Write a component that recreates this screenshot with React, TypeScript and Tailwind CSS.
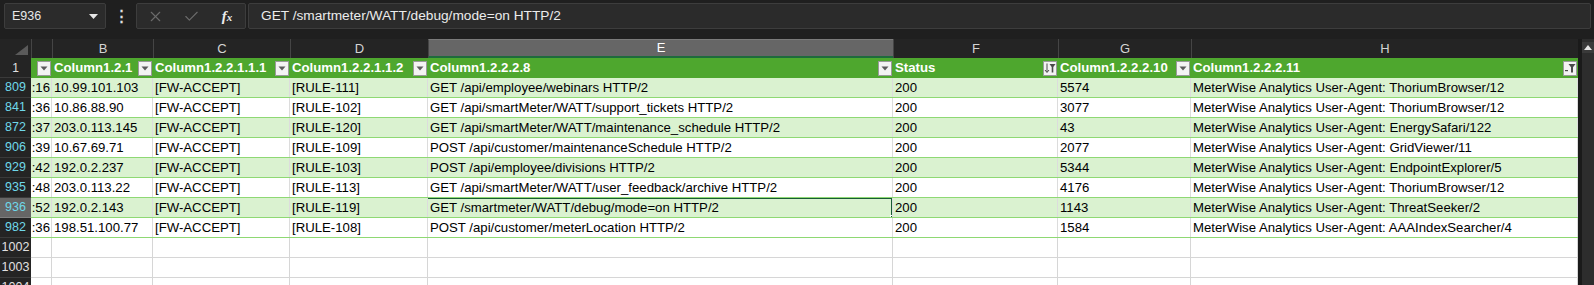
import { X, Check } from "lucide-react";

type Row = {
  n: number;
  a: string;
  b: string;
  d: string;
  e: string;
  g: string;
  ua: string;
};

const rows: Row[] = [
  { n: 809, a: ":16", b: "10.99.101.103", d: "[RULE-111]", e: "GET /api/employee/webinars HTTP/2", g: "5574", ua: "ThoriumBrowser/12" },
  { n: 841, a: ":36", b: "10.86.88.90", d: "[RULE-102]", e: "GET /api/smartMeter/WATT/support_tickets HTTP/2", g: "3077", ua: "ThoriumBrowser/12" },
  { n: 872, a: ":37", b: "203.0.113.145", d: "[RULE-120]", e: "GET /api/smartMeter/WATT/maintenance_schedule HTTP/2", g: "43", ua: "EnergySafari/122" },
  { n: 906, a: ":39", b: "10.67.69.71", d: "[RULE-109]", e: "POST /api/customer/maintenanceSchedule HTTP/2", g: "2077", ua: "GridViewer/11" },
  { n: 929, a: ":42", b: "192.0.2.237", d: "[RULE-103]", e: "POST /api/employee/divisions HTTP/2", g: "5344", ua: "EndpointExplorer/5" },
  { n: 935, a: ":48", b: "203.0.113.22", d: "[RULE-113]", e: "GET /api/smartMeter/WATT/user_feedback/archive HTTP/2", g: "4176", ua: "ThoriumBrowser/12" },
  { n: 936, a: ":52", b: "192.0.2.143", d: "[RULE-119]", e: "GET /smartmeter/WATT/debug/mode=on HTTP/2", g: "1143", ua: "ThreatSeeker/2" },
  { n: 982, a: ":36", b: "198.51.100.77", d: "[RULE-108]", e: "POST /api/customer/meterLocation HTTP/2", g: "1584", ua: "AAAIndexSearcher/4" },
];

// column widths A..H (A is scrolled, only its tail shows)
const widths = ["w-[21px]", "w-[101px]", "w-[137px]", "w-[138px]", "w-[465px]", "w-[165px]", "w-[133px]", "w-[387px]"];
const letters = ["", "B", "C", "D", "E", "F", "G", "H"];
const headers = ["", "Column1.2.1", "Column1.2.2.1.1.1", "Column1.2.2.1.1.2", "Column1.2.2.2.8", "Status", "Column1.2.2.2.10", "Column1.2.2.2.11"];

const FilterButton = ({ kind = "plain" }: { kind?: "plain" | "sort" | "filter" }) => (
  <div className="w-[14px] h-[15px] shrink-0 bg-[#f3f3f3] border border-[#9a9a9a] flex items-center justify-center">
    <svg width="12" height="12" viewBox="0 0 12 12">
      {kind === "plain" && <polygon points="2.5,4.5 9.5,4.5 6,8.5" fill="#5b5b5b" />}
      {kind === "sort" && (
        <g fill="#4a4a4a" stroke="#4a4a4a">
          <line x1="3" y1="1.5" x2="3" y2="10" strokeWidth="1" />
          <polyline points="1,8 3,10.5 5,8" fill="none" strokeWidth="1" />
          <polygon points="5.5,2 11.5,2 9.3,5 9.3,10.5 7.7,10.5 7.7,5" stroke="none" />
        </g>
      )}
      {kind === "filter" && (
        <g fill="#4a4a4a">
          <rect x="1" y="8" width="3" height="1.2" />
          <polygon points="4.5,2 11.5,2 9,5.2 9,10.5 7,10.5 7,5.2" />
        </g>
      )}
    </svg>
  </div>
);

const sheetFont = "font-['Liberation_Sans',Arial,sans-serif]";

export default function App() {
  return (
    <div className={`w-[1594px] h-[285px] overflow-hidden bg-[#1f1f1f] ${sheetFont}`}>
      {/* formula bar */}
      <div className="h-[39px] flex items-start pt-[3px]">
        <div className="ml-[4px] w-[102px] h-[26px] bg-[#2b2b2b] border border-[#3d3d3d] rounded-[2px] flex items-center justify-between pl-[7px] pr-[7px]">
          <span className="text-[12.5px] text-[#e8e8e8]">E936</span>
          <svg width="9" height="5" viewBox="0 0 9 5">
            <polygon points="0,0 9,0 4.5,5" fill="#e6e6e6" />
          </svg>
        </div>
        <div className="w-[30px] h-[26px] flex items-center justify-center text-[#e0e0e0] text-[15px] font-bold">⋮</div>
        <div className="w-[110px] h-[26px] bg-[#2b2b2b] border border-[#3d3d3d] rounded-[2px] flex items-center">
          <div className="w-[36px] flex justify-center text-[#6b6b6b]">
            <X size={17} strokeWidth={1.6} />
          </div>
          <div className="w-[36px] flex justify-center text-[#6b6b6b]">
            <Check size={17} strokeWidth={1.6} />
          </div>
          <div className="w-[36px] flex justify-center items-baseline text-[#ececec] font-['Liberation_Serif',serif] italic">
            <span className="text-[15px] font-bold">f</span>
            <span className="text-[11px] font-bold">x</span>
          </div>
        </div>
        <div className="ml-[2px] mr-[3px] flex-1 h-[26px] bg-[#2b2b2b] border border-[#3d3d3d] rounded-[2px] flex items-center pl-[12px]">
          <span className="text-[13.7px] text-[#ececec] whitespace-nowrap">GET /smartmeter/WATT/debug/mode=on HTTP/2</span>
        </div>
      </div>

      <div className="flex">
        <div className="w-[1578px]">
          {/* column letters */}
          <div className="flex h-[19px] bg-[#242424]">
            <div className="w-[31px] h-full flex items-end justify-end pr-[3px] pb-[3px]">
              <svg width="13" height="10" viewBox="0 0 13 10">
                <polygon points="13,0 13,10 0,10" fill="#5a5a5a" />
              </svg>
            </div>
            {letters.map((l, i) => (
              <div
                key={i}
                className={`${widths[i]} h-full flex items-center justify-center text-[13px] border-l border-[#454545] ${
                  l === "E" ? "bg-[#666666] text-white border-b-2 border-b-[#1e6b3c] border-t border-t-[#7a7a7a]" : "text-[#d4d4d4]"
                }`}
              >
                {l}
              </div>
            ))}
          </div>

          {/* table header row */}
          <div className="flex h-[20px]">
            <div className="w-[31px] h-full flex items-center justify-center text-[12px] text-[#e0e0e0] bg-[#242424] border-b border-[#3a3a3a]">1</div>
            {headers.map((h, i) => (
              <div key={i} className={`${widths[i]} h-full bg-[#4ea72e] flex items-center justify-between pl-[2px] pr-[1px] overflow-hidden`}>
                <span className="text-[13.2px] font-bold text-white whitespace-nowrap">{h}</span>
                <FilterButton kind={i === 5 ? "sort" : i === 7 ? "filter" : "plain"} />
              </div>
            ))}
          </div>

          {/* data rows */}
          {rows.map((r, idx) => {
            const cells = [r.a, r.b, "[FW-ACCEPT]", r.d, r.e, "200", r.g, `MeterWise Analytics User-Agent: ${r.ua}`];
            const active = r.n === 936;
            return (
              <div key={r.n} className="flex h-[20px]">
                <div
                  className={`w-[31px] h-full flex items-center justify-center text-[12.5px] text-[#6fd8ea] border-b ${
                    active ? "bg-[#666666] border-[#808080]" : "bg-[#242424] border-[#3a3a3a]"
                  }`}
                >
                  {r.n}
                </div>
                <div className={`flex border-b border-[#8ed973] ${idx % 2 === 0 ? "bg-[#daf2d0]" : "bg-white"}`}>
                  {cells.map((c, i) => (
                    <div
                      key={i}
                      className={`${widths[i]} h-[19px] border-r border-[#dcdcdc] flex items-center overflow-hidden whitespace-nowrap text-[13.2px] text-black ${
                        i === 0 ? "justify-end pr-[1px]" : "pl-[2px]"
                      } ${active && i === 4 ? "relative" : ""}`}
                    >
                      {c}
                      {active && i === 4 && (
                        <>
                          <div className="absolute -left-[2px] -top-[1px] -right-[1px] -bottom-[2px] border-2 border-[#185c34] z-10" />
                          <div className="absolute -right-[4px] -bottom-[4px] w-[6px] h-[6px] bg-[#185c34] border border-white z-20" />
                        </>
                      )}
                    </div>
                  ))}
                </div>
              </div>
            );
          })}

          {/* empty rows */}
          {[1002, 1003, 1004].map((n) => (
            <div key={n} className="flex h-[20px]">
              <div className="w-[31px] h-full flex items-center justify-center text-[12.5px] text-[#e0e0e0] bg-[#242424] border-b border-[#3a3a3a]">
                {n}
              </div>
              <div className="flex bg-white">
                {widths.map((w, i) => (
                  <div key={i} className={`${w} h-[20px] border-r border-b border-[#d6d6d6]`} />
                ))}
              </div>
            </div>
          ))}
        </div>

        {/* vertical scrollbar */}
        <div className="w-[16px] h-[246px] bg-[#2d2d2d] border-l-4 border-[#1a1a1a] flex flex-col items-center pt-[3px]">
          <div className="w-[12px] h-[11px] bg-[#3a3a3a] flex items-center justify-center">
            <svg width="8" height="5" viewBox="0 0 8 5">
              <polygon points="0,5 8,5 4,0" fill="#e6e6e6" />
            </svg>
          </div>
        </div>
      </div>
    </div>
  );
}
